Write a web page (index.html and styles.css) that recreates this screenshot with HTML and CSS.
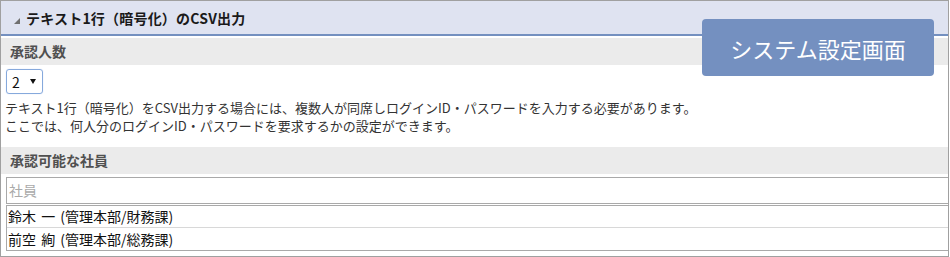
FILE: index.html
```html
<!DOCTYPE html>
<html lang="ja">
<head>
<meta charset="utf-8">
<title>テキスト1行（暗号化）のCSV出力</title>
<link rel="stylesheet" href="styles.css">
</head>
<body>
<div class="frame">
  <div class="header">
    <span class="tri"></span>
    <span class="title">テキスト1行（暗号化）のCSV出力</span>
  </div>
  <div class="label first">承認人数</div>
  <div class="select-row">
    <div class="select"><span class="val">2</span><span class="caret"></span></div>
  </div>
  <div class="desc">
    <div class="line">テキスト1行（暗号化）をCSV出力する場合には、複数人が同席しログインID・パスワードを入力する必要があります。</div>
    <div class="line">ここでは、何人分のログインID・パスワードを要求するかの設定ができます。</div>
  </div>
  <div class="label second">承認可能な社員</div>
  <div class="input">社員</div>
  <div class="list">
    <div class="item">鈴木 一 (管理本部/財務課)</div>
    <div class="item">前空 絢 (管理本部/総務課)</div>
  </div>
  <div class="badge">システム設定画面</div>
</div>
</body>
</html>
```
FILE: styles.css
```css
html, body {
  margin: 0;
  padding: 0;
  background: #ffffff;
}
body {
  font-family: "Noto Sans CJK JP", "Noto Sans", sans-serif;
  font-size: 13px;
  color: #333333;
}
.frame {
  position: relative;
  box-sizing: border-box;
  width: 949px;
  height: 257px;
  border: 1px solid #a0a0a0;
  overflow: hidden;
}
.header {
  box-sizing: border-box;
  height: 35px;
  background: #dfe3f1;
  border-bottom: 2px solid #7490c0;
  display: flex;
  align-items: center;
  padding-left: 13px;
}
.tri {
  width: 0;
  height: 0;
  border-style: solid;
  border-width: 0 0 6px 6px;
  border-color: transparent transparent #707070 transparent;
  margin-top: 7px;
  margin-right: 6px;
}
.title {
  font-size: 14px;
  font-weight: bold;
  color: #1a1a1a;
  letter-spacing: 0.2px;
}
.label {
  height: 27px;
  line-height: 27px;
  background: #ebebeb;
  font-size: 14px;
  font-weight: bold;
  color: #505050;
  padding-left: 9px;
}
.label.first {
  margin-top: 2px;
}
.label.second {
  margin-top: 12px;
}
.select-row {
  padding: 4px 0 0 5px;
}
.select {
  box-sizing: border-box;
  width: 37px;
  height: 25px;
  border: 1px solid #86a9dc;
  border-radius: 3px;
  box-shadow: 0 0 1px #b9cdef;
  display: flex;
  align-items: center;
  padding-left: 5px;
}
.val {
  font-size: 14px;
  color: #111111;
}
.caret {
  width: 0;
  height: 0;
  border-style: solid;
  border-width: 5px 3px 0 3px;
  border-color: #111111 transparent transparent transparent;
  margin-left: 10px;
}
.desc {
  margin-top: 5px;
  padding-left: 4px;
  font-size: 13px;
  line-height: 18px;
  color: #333333;
}
.input {
  box-sizing: border-box;
  margin: 3px 0 0 5px;
  height: 27px;
  line-height: 25px;
  border: 1px solid #a9a9a9;
  border-right: none;
  padding-left: 2px;
  color: #aaaaaa;
  font-size: 14px;
}
.list {
  margin: 1px 0 0 5px;
  border: 1px solid #a9a9a9;
  border-right: none;
}
.item {
  height: 21px;
  line-height: 21px;
  padding-left: 1px;
  color: #111111;
  font-size: 14px;
  word-spacing: 2px;
}
.item + .item {
  border-top: 1px solid #d8d8d8;
  height: 22px;
  line-height: 22px;
}
.badge {
  position: absolute;
  left: 701px;
  top: 18px;
  width: 232px;
  height: 57px;
  background: #7490c0;
  border-radius: 4px;
  color: #ffffff;
  font-size: 22px;
  display: flex;
  align-items: center;
  justify-content: center;
}
```
